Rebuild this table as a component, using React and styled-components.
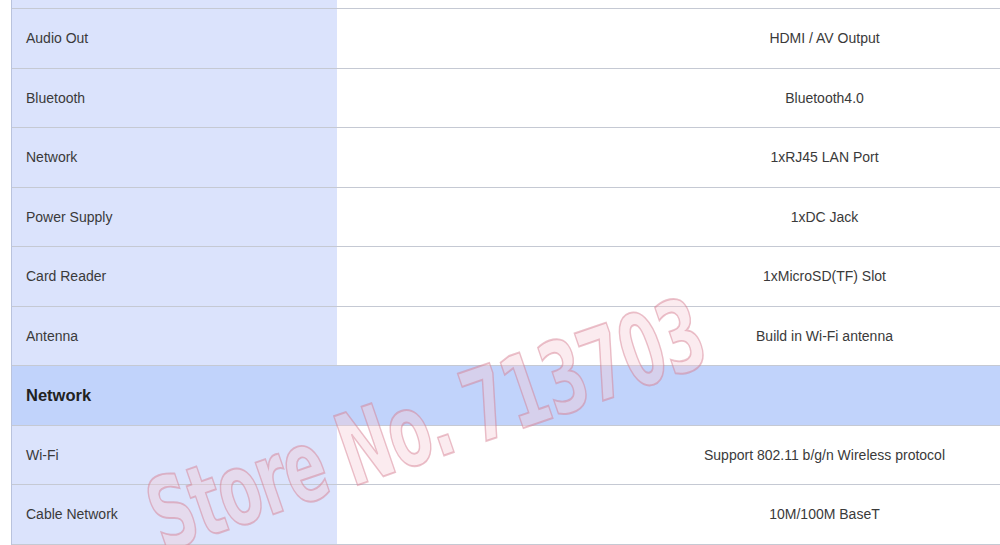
import React from "react";
import styled, { createGlobalStyle } from "styled-components";

const GlobalStyle = createGlobalStyle`
  html, body {
    margin: 0;
    padding: 0;
    background: #ffffff;
  }
  body {
    font-family: "Liberation Sans", Arial, sans-serif;
    overflow: hidden;
  }
`;

const Page = styled.div`
  position: relative;
  width: 1000px;
  height: 545px;
  overflow: hidden;
  background: #ffffff;
  padding-left: 11px;
  box-sizing: border-box;
`;

const Table = styled.div`
  width: 1300px;
  border-left: 1px solid #b9c3dd;
  display: flex;
  flex-direction: column;
`;

const Stub = styled.div`
  display: grid;
  grid-template-columns: 325px 1fr;
  height: 8px;
  border-bottom: 1px solid #c5c9d3;
`;

const Row = styled.div`
  display: grid;
  grid-template-columns: 325px 1fr;
  height: 58.5px;
  border-bottom: 1px solid #c5c9d3;
  background: ${({ $header }) => ($header ? "#c1d3fb" : "#ffffff")};
`;

const Label = styled.div`
  background: ${({ $header }) => ($header ? "#c1d3fb" : "#dbe3fc")};
  display: flex;
  align-items: center;
  padding-left: 14px;
  font-size: ${({ $header }) => ($header ? "16.5px" : "14px")};
  font-weight: ${({ $header }) => ($header ? 700 : 400)};
  color: ${({ $header }) => ($header ? "#222" : "#3a3a3a")};
`;

const Value = styled.div`
  background: ${({ $header }) => ($header ? "#c1d3fb" : "#ffffff")};
  display: flex;
  align-items: center;
  justify-content: center;
  font-size: 14px;
  color: #3a3a3a;
`;

const Watermark = styled.div`
  position: absolute;
  left: 152px;
  top: 470px;
  transform: rotate(-19deg) scaleX(0.68);
  transform-origin: left center;
  font-family: "DejaVu Sans Condensed", "DejaVu Sans", sans-serif;
  font-weight: 700;
  font-size: 100px;
  line-height: 1;
  letter-spacing: -2px;
  white-space: nowrap;
  color: rgba(245, 205, 215, 0.4);
  -webkit-text-stroke: 2px rgba(210, 120, 140, 0.45);
  pointer-events: none;
`;

const rows = [
  { label: "Audio Out", value: "HDMI / AV Output" },
  { label: "Bluetooth", value: "Bluetooth4.0" },
  { label: "Network", value: "1xRJ45 LAN Port" },
  { label: "Power Supply", value: "1xDC Jack" },
  { label: "Card Reader", value: "1xMicroSD(TF) Slot" },
  { label: "Antenna", value: "Build in Wi-Fi antenna" },
  { label: "Network", header: true },
  { label: "Wi-Fi", value: "Support 802.11 b/g/n Wireless protocol" },
  { label: "Cable Network", value: "10M/100M BaseT" },
];

export default function App() {
  return (
    <>
      <GlobalStyle />
      <Page>
        <Table>
          <Stub>
            <Label />
            <Value />
          </Stub>
          {rows.map((r, i) => (
            <Row key={i} $header={r.header}>
              <Label $header={r.header}>{r.label}</Label>
              <Value $header={r.header}>{r.value}</Value>
            </Row>
          ))}
        </Table>
        <Watermark>Store No. 713703</Watermark>
      </Page>
    </>
  );
}
